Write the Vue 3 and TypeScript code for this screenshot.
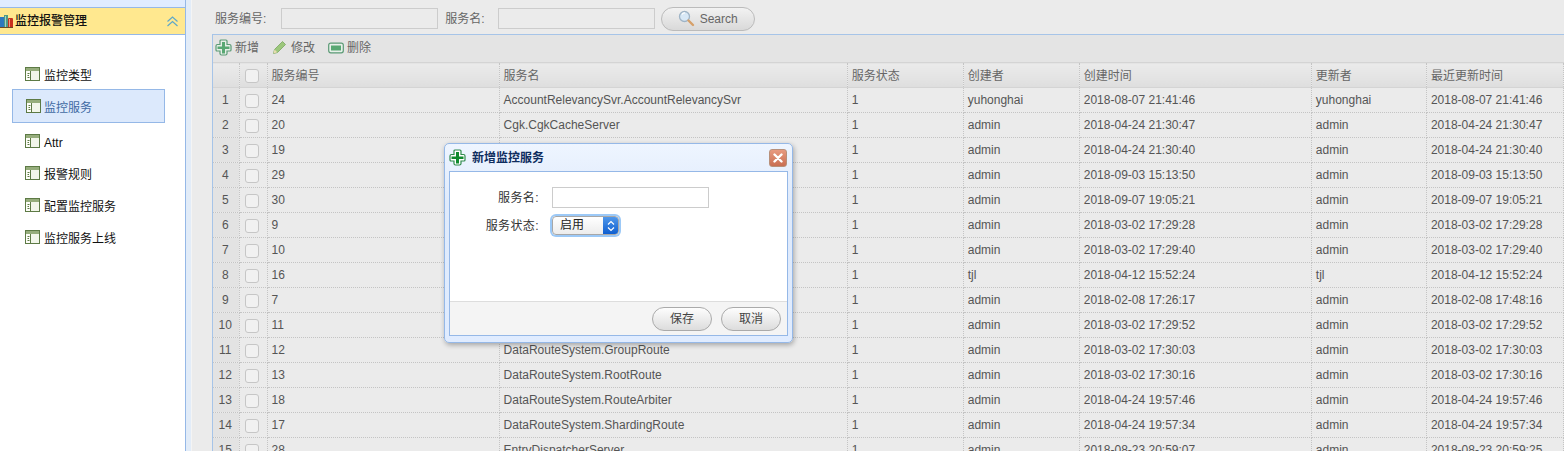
<script setup lang="ts">
interface Row {
  id: string
  name: string
  creator: string
  created: string
  updated?: string
}

const navItems = ['监控类型', '监控服务', 'Attr', '报警规则', '配置监控服务', '监控服务上线']
const columns = ['服务编号', '服务名', '服务状态', '创建者', '创建时间', '更新者', '最近更新时间']
const colWidths = [26, 28, 232, 348, 116, 116, 232, 115, 137]

// names of rows 3-10 sit behind the dialog
const rows: Row[] = [
  { id: '24', name: 'AccountRelevancySvr.AccountRelevancySvr', creator: 'yuhonghai', created: '2018-08-07 21:41:46' },
  { id: '20', name: 'Cgk.CgkCacheServer', creator: 'admin', created: '2018-04-24 21:30:47' },
  { id: '19', name: '', creator: 'admin', created: '2018-04-24 21:30:40' },
  { id: '29', name: '', creator: 'admin', created: '2018-09-03 15:13:50' },
  { id: '30', name: '', creator: 'admin', created: '2018-09-07 19:05:21' },
  { id: '9', name: '', creator: 'admin', created: '2018-03-02 17:29:28' },
  { id: '10', name: '', creator: 'admin', created: '2018-03-02 17:29:40' },
  { id: '16', name: '', creator: 'tjl', created: '2018-04-12 15:52:24' },
  { id: '7', name: '', creator: 'admin', created: '2018-02-08 17:26:17', updated: '2018-02-08 17:48:16' },
  { id: '11', name: '', creator: 'admin', created: '2018-03-02 17:29:52' },
  { id: '12', name: 'DataRouteSystem.GroupRoute', creator: 'admin', created: '2018-03-02 17:30:03' },
  { id: '13', name: 'DataRouteSystem.RootRoute', creator: 'admin', created: '2018-03-02 17:30:16' },
  { id: '18', name: 'DataRouteSystem.RouteArbiter', creator: 'admin', created: '2018-04-24 19:57:46' },
  { id: '17', name: 'DataRouteSystem.ShardingRoute', creator: 'admin', created: '2018-04-24 19:57:34' },
  { id: '28', name: 'EntryDispatcherServer', creator: 'admin', created: '2018-08-23 20:59:07', updated: '2018-08-23 20:59:25' },
]
</script>

<template>
  <div class="page">
    <aside class="side">
      <div class="side-top" />
      <div class="side-head">
        <svg class="books" width="14" height="15" viewBox="0 0 14 15">
          <rect x="0" y="3" width="4" height="11" fill="#2e78bd" />
          <rect x="4" y="1" width="4" height="13" fill="#4f9a86" />
          <rect x="5" y="2" width="1" height="11" fill="#a7d3c4" />
          <rect x="8" y="4" width="5" height="10" rx="1" fill="#c8321f" />
          <rect x="9" y="5" width="1" height="8" fill="#ee9a80" />
          <rect x="0" y="13" width="13" height="1" fill="#6d4a22" />
        </svg>
        <span class="side-title">监控报警管理</span>
        <svg class="collapse" width="11" height="11" viewBox="0 0 11 11" fill="none" stroke="#5fa8c8" stroke-width="1.2">
          <path d="M0.5 5.5 5.5 1l5 4.5" />
          <path d="M0.5 10 5.5 5.5l5 4.5" />
        </svg>
      </div>
      <nav class="nav">
        <a v-for="item in navItems" :key="item" class="nav-item" :class="{ active: item === '监控服务' }">
          <svg width="15" height="14" viewBox="0 0 15 14">
            <rect x="0.5" y="0.5" width="14" height="13" fill="#f2f6ea" stroke="#5d7a45" />
            <rect x="1" y="1" width="13" height="3" fill="#96ad7c" />
            <rect x="1" y="4" width="4.500" height="9" fill="#fdfdf8" />
            <path d="M5.500 4v9" stroke="#5d7a45" />
            <path d="M2.500 6.500h2M2.500 8.500h1.500M2.500 10.500h2" stroke="#5d7a45" />
          </svg>
          <span>{{ item }}</span>
        </a>
      </nav>
    </aside>

    <main class="main">
      <div class="search">
        <label class="field-label first">服务编号:</label>
        <input class="field" type="text" />
        <label class="field-label">服务名:</label>
        <input class="field" type="text" />
        <button class="search-btn">
          <svg width="17" height="17" viewBox="0 0 17 17" fill="none">
            <circle cx="6.500" cy="6.500" r="5" fill="#d8e8f6" stroke="#9fb4c6" stroke-width="1.300" />
            <path d="M4 4.500a3 3 0 0 1 3-1.500" stroke="#fff" stroke-width="1.200" />
            <path d="M10.500 10.500 15 15" stroke="#d6a06a" stroke-width="2.400" stroke-linecap="round" />
          </svg>
          Search
        </button>
      </div>

      <section class="grid">
        <div class="toolbar">
          <a class="tool">
            <svg width="17" height="17" viewBox="0 0 17 17">
              <path d="M6 1h5a1 1 0 0 1 1 1v3.500h2.500a1.500 1.500 0 0 1 1.500 1.500v4a1 1 0 0 1-1 1H12v2.500a1.500 1.500 0 0 1-1.500 1.500h-4A1.500 1.500 0 0 1 5 14.500V12H2a1 1 0 0 1-1-1V7a1.500 1.500 0 0 1 1.500-1.500H5V2a1 1 0 0 1 1-1z" fill="#e6efe8" stroke="#5b9a75" stroke-width="1.200" />
              <path d="M7 3h3v4.500h4.500v2.500H10v4.500H7V10H2.500V7.500H7z" fill="#58a873" />
            </svg>
            新增
          </a>
          <a class="tool pen">
            <svg width="15" height="15" viewBox="0 0 15 15">
              <path d="M1.500 13.500 2.500 9.500 10.500 1.500l3 3-8 8z" fill="#9cc77c" stroke="#79a65f" stroke-width="0.800" />
              <path d="M1.500 13.500 2.500 9.500l2.800 2.800z" fill="#e9ddb0" />
            </svg>
            修改
          </a>
          <a class="tool">
            <svg width="16" height="12" viewBox="0 0 16 12">
              <rect x="0.700" y="1.200" width="14.600" height="9.600" rx="2" fill="#e8f0ea" stroke="#5b9a75" stroke-width="1.200" />
              <rect x="3" y="3.500" width="10" height="5" fill="#58a873" />
            </svg>
            删除
          </a>
        </div>

        <table class="table">
          <colgroup>
            <col v-for="(w, i) in colWidths" :key="i" :style="{ width: w + 'px' }" />
          </colgroup>
          <thead>
            <tr>
              <th class="num" />
              <th class="check"><span class="box" /></th>
              <th v-for="c in columns" :key="c">{{ c }}</th>
            </tr>
          </thead>
          <tbody>
            <tr v-for="(r, i) in rows" :key="r.id">
              <td class="num">{{ i + 1 }}</td>
              <td class="check"><span class="box" /></td>
              <td>{{ r.id }}</td>
              <td>{{ r.name }}</td>
              <td>1</td>
              <td>{{ r.creator }}</td>
              <td>{{ r.created }}</td>
              <td>{{ r.creator }}</td>
              <td>{{ r.updated || r.created }}</td>
            </tr>
          </tbody>
        </table>
      </section>
    </main>

    <div class="dialog">
      <header class="dialog-head">
        <svg width="17" height="17" viewBox="0 0 17 17">
          <path d="M6 1h5a1 1 0 0 1 1 1v3.500h2.500a1.500 1.500 0 0 1 1.500 1.500v4a1 1 0 0 1-1 1H12v2.500a1.500 1.500 0 0 1-1.500 1.500h-4A1.500 1.500 0 0 1 5 14.500V12H2a1 1 0 0 1-1-1V7a1.500 1.500 0 0 1 1.500-1.500H5V2a1 1 0 0 1 1-1z" fill="#fff" stroke="#2f8a4c" stroke-width="1.200" />
          <path d="M7 3h3v4.500h4.500v2.500H10v4.500H7V10H2.500V7.500H7z" fill="#0f8a2c" />
        </svg>
        <span class="dialog-title">新增监控服务</span>
        <span class="close">
          <svg width="10" height="10" viewBox="0 0 10 10" stroke="#fff" stroke-width="2.400" stroke-linecap="round">
            <path d="M1.500 1.500l7 7M8.500 1.500l-7 7" />
          </svg>
        </span>
      </header>
      <div class="dialog-body">
        <div class="form">
          <div class="form-row">
            <label>服务名:</label>
            <input class="field modal-field" type="text" />
          </div>
          <div class="form-row">
            <label>服务状态:</label>
            <div class="select">
              <span class="select-text">启用</span>
              <span class="select-arrow">
                <svg width="8" height="12" viewBox="0 0 8 12" fill="none" stroke="#fff" stroke-width="1.200">
                  <path d="M1 4.500 4 1.500l3 3M1 7.500l3 3 3-3" />
                </svg>
              </span>
            </div>
          </div>
        </div>
        <footer class="dialog-foot">
          <button class="pill">保存</button>
          <button class="pill">取消</button>
        </footer>
      </div>
    </div>
  </div>
</template>

<style>
html,
body {
  margin: 0;
  overflow: hidden;
  background: #ebebeb;
}
</style>

<style scoped>
.page {
  position: relative;
  display: flex;
  width: 1564px;
  height: 451px;
  overflow: hidden;
  background: #ebebeb;
  color: #555;
  font: 12px/16px "Liberation Sans", "Noto Sans CJK SC", sans-serif;
}

.side {
  flex: none;
  width: 185px;
  height: 100%;
  background: #fff;
  border-right: 1px solid #95b8e7;
  box-shadow: 5px 0 0 #e2ecf8;
  margin-right: 5px;
}
.side-top {
  height: 7px;
  background: #e0ecff;
  border-bottom: 1px solid #95b8e7;
}
.side-head {
  display: flex;
  align-items: center;
  height: 26px;
  background: #ffe88f;
  border-bottom: 1px solid #95b8e7;
  color: #111;
}
.books {
  flex: none;
}
.side-title {
  margin-left: 1px;
  font-weight: 500;
}
.collapse {
  margin-left: auto;
  margin-right: 7px;
}
.nav {
  display: flex;
  flex-direction: column;
  padding-top: 24px;
  color: #111;
}
.nav-item {
  display: flex;
  align-items: center;
  gap: 4px;
  height: 32px;
  margin-left: 12px;
  width: 153px;
  padding: 2px 0 0 13px;
  box-sizing: border-box;
}
.nav-item svg {
  margin-top: -5px;
}
.nav-item.active {
  gap: 3px;
  height: 34px;
  margin-top: -2px;
  margin-bottom: 3px;
  padding-top: 3px;
  background: #dce9fc;
  border: 1px solid #95b8e7;
  color: #416aa3;
}
.nav-item.active svg {
  margin-top: -4px;
}

.main {
  flex: 1;
  min-width: 0;
  height: 100%;
  border-left: 1px solid #f4f4f4;
}
.search {
  display: flex;
  align-items: center;
  height: 34px;
  padding: 3px 0 0 23px;
  box-sizing: border-box;
  color: #666;
}
.field-label {
  margin-right: 13px;
}
.field-label.first {
  margin-right: 15px;
}
.field {
  width: 157px;
  height: 21px;
  box-sizing: border-box;
  margin: 0 7px 0 0;
  padding: 0;
  border: 1px solid #ccc;
  background: #ebebeb;
  outline: none;
}
.search .field:nth-of-type(2) {
  margin-right: 6px;
}
.search-btn {
  display: flex;
  align-items: center;
  justify-content: center;
  gap: 5px;
  width: 94px;
  height: 24px;
  padding: 0;
  border: 1px solid #bbb;
  border-radius: 12px;
  background: linear-gradient(#f2f2f2, #d9d9d9);
  color: #666;
  font: inherit;
}

.grid {
  margin-left: 20px;
  border-top: 1px solid #a6c4e8;
  border-left: 1px solid #a6c4e8;
}
.toolbar {
  display: flex;
  align-items: center;
  gap: 12px;
  height: 27px;
  padding: 0 0 2px 2px;
  box-sizing: border-box;
  background: #e4e4e4;
  color: #666;
}
.tool {
  display: flex;
  align-items: center;
  gap: 3px;
}
.tool.pen {
  gap: 4px;
  margin: 0 1px;
}
.table {
  table-layout: fixed;
  width: 1351px;
  border-collapse: collapse;
  color: #555;
}
.table th,
.table td {
  padding: 0 4px;
  box-sizing: border-box;
  border-right: 1px dotted #c4c4c4;
  border-bottom: 1px dotted #c4c4c4;
  text-align: left;
  font-weight: 400;
  white-space: nowrap;
  overflow: hidden;
}
.table th {
  height: 25px;
  padding-top: 2px;
  background: linear-gradient(#ebebeb, #dedede);
  border-top: 1px solid #d4d4d4;
  border-bottom: 1px solid #d4d4d4;
  color: #666;
}
.table td {
  height: 25px;
  background: #ebebeb;
}
.table .num {
  text-align: center;
  padding: 0 1px 0 0;
  background: #e3e3e3;
}
.table th.num {
  background: linear-gradient(#ebebeb, #dedede);
}
.table .check {
  text-align: center;
  padding: 0 2px 0 0;
}
.box {
  display: inline-block;
  width: 12px;
  height: 12px;
  vertical-align: middle;
  border: 1px solid #c6c6c6;
  border-radius: 3px;
  background: #f1f1f1;
}

.dialog {
  position: absolute;
  left: 444px;
  top: 143px;
  width: 349px;
  height: 200px;
  box-sizing: border-box;
  padding: 0 4px 6px;
  display: flex;
  flex-direction: column;
  border: 1px solid #95b8e7;
  border-radius: 5px;
  background: linear-gradient(#eef5ff, #dfeafb 30%, #e0ecff);
  box-shadow: 1px 2px 5px rgba(0, 0, 0, 0.3);
}
.dialog-head {
  flex: none;
  display: flex;
  align-items: center;
  height: 27px;
}
.dialog-title {
  margin-left: 6px;
  color: #0e2d5f;
  font-weight: 700;
}
.close {
  display: flex;
  align-items: center;
  justify-content: center;
  width: 16px;
  height: 16px;
  margin-left: auto;
  margin-right: 1px;
  border-radius: 3px;
  border: 1px solid #b8907a;
  background: linear-gradient(#e89a80, #c96f53);
}
.dialog-body {
  flex: 1;
  display: flex;
  flex-direction: column;
  border: 1px solid #95b8e7;
  background: #fff;
}
.form {
  flex: 1;
  padding-top: 15px;
  color: #333;
}
.form-row {
  display: flex;
  align-items: center;
  height: 21px;
  margin-bottom: 7px;
}
.form-row label {
  width: 89px;
  letter-spacing: 0.4px;
  text-align: right;
}
.modal-field {
  margin: 0 0 0 13px;
  background: #fff;
}
.select {
  display: flex;
  width: 65px;
  height: 17px;
  margin: 0 0 0 13px;
  border-radius: 4px;
  border: 1px solid #a7a7a7;
  box-shadow: 0 0 0 2px #9cc9f7;
  overflow: hidden;
  background: linear-gradient(#fff, #ececec);
}
.select-text {
  flex: 1;
  padding-left: 7px;
  line-height: 16px;
  color: #222;
}
.select-arrow {
  flex: none;
  display: flex;
  align-items: center;
  justify-content: center;
  width: 15px;
  background: linear-gradient(#4f97ea, #0f5fd0);
}
.dialog-foot {
  flex: none;
  display: flex;
  justify-content: flex-end;
  align-items: center;
  gap: 9px;
  height: 33px;
  padding-right: 6px;
  border-top: 1px solid #ddd;
  background: #f4f4f4;
}
.pill {
  width: 60px;
  height: 24px;
  padding: 0;
  border: 1px solid #aaa;
  border-radius: 12px;
  background: linear-gradient(#fdfdfd, #dcdcdc);
  color: #444;
  font: inherit;
}
</style>
